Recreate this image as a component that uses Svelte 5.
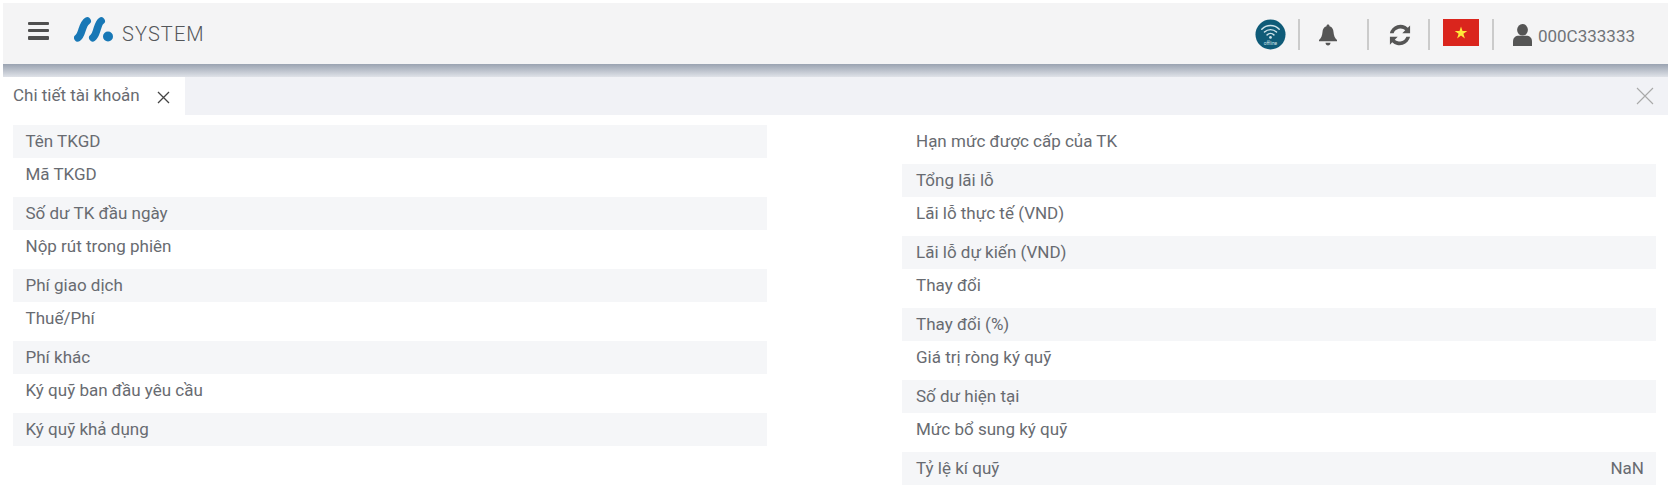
<script>
  const left = [
    ['Tên TKGD', true], ['Mã TKGD', false], ['Số dư TK đầu ngày', true], ['Nộp rút trong phiên', false],
    ['Phí giao dịch', true], ['Thuế/Phí', false], ['Phí khác', true], ['Ký quỹ ban đầu yêu cầu', false],
    ['Ký quỹ khả dụng', true]
  ];
  const right = [
    ['Hạn mức được cấp của TK', false], ['Tổng lãi lỗ', true], ['Lãi lỗ thực tế (VND)', false], ['Lãi lỗ dự kiến (VND)', true],
    ['Thay đổi', false], ['Thay đổi (%)', true], ['Giá trị ròng ký quỹ', false], ['Số dư hiện tại', true],
    ['Mức bổ sung ký quỹ', false], ['Tỷ lệ kí quỹ', true, 'NaN']
  ];
</script>

<div class="page">
  <header class="topbar">
    <button class="menu" aria-label="Menu"><span></span><span></span><span></span></button>
    <svg class="logo" viewBox="0 0 39 25" aria-hidden="true">
      <path d="M3.800 20.800C6.500 19 7.200 15.500 8.200 12.500S10.800 5.500 13.200 4" />
      <path d="M18.800 20.800C21.300 19 22 15.500 23 12.500S25 5.500 27.200 4" />
      <circle cx="34" cy="19.500" r="5" />
    </svg>
    <span class="brand">SYSTEM</span>
    <div class="tools">
      <div class="offline">
        <svg viewBox="0 0 32 32" aria-hidden="true">
          <circle cx="16" cy="16" r="15.500" fill="#0f5b78" />
          <g fill="none" stroke="#cfe3ea" stroke-width="1.500" stroke-linecap="round">
            <path d="M7 10.500a12.500 12.500 0 0 1 18 0" />
            <path d="M9.800 13.500a8.800 8.800 0 0 1 12.400 0" />
            <path d="M12.500 16.400a5 5 0 0 1 7 0" />
          </g>
          <circle cx="16" cy="19" r="1.400" fill="#cfe3ea" />
          <text x="16" y="26.500" text-anchor="middle">offline</text>
        </svg>
      </div>
      <i class="sep s1"></i>
      <svg class="bell" viewBox="0 0 20 22" aria-hidden="true">
        <path d="M10 0.500c1 0 1.500.7 1.500 1.700 2.800.8 3.800 3 4 5.800.3 3.800 1.300 6 3.500 8v1.300H1V16c2.200-2 3.200-4.200 3.500-8 .2-2.800 1.200-5 4-5.800C8.500 1.200 9 0.500 10 0.500z" />
        <path d="M7.500 18.800h5c0 1.500-1.100 2.700-2.500 2.700s-2.500-1.200-2.500-2.700z" />
      </svg>
      <i class="sep s2"></i>
      <svg class="sync" viewBox="0 0 24 24" aria-hidden="true">
        <path d="M23 1.500v8.500h-8.500l3.200-3.200A8 8 0 0 0 5 10H1A11.800 11.800 0 0 1 20.500 4z" />
        <path d="M1 22.500V14h8.500l-3.200 3.200A8 8 0 0 0 19 14h4A11.800 11.800 0 0 1 3.500 20z" />
      </svg>
      <i class="sep s3"></i>
      <svg class="flag" viewBox="0 0 36 27" aria-hidden="true">
        <rect width="36" height="27" fill="#da251d" />
        <path d="M18 7.500l1.500 4.500h4.800l-3.900 2.800 1.500 4.600-3.900-2.900-3.900 2.900 1.500-4.600-3.900-2.800h4.800z" fill="#ffe83a" />
      </svg>
      <i class="sep s4"></i>
      <svg class="user" viewBox="0 0 19 22" aria-hidden="true">
        <ellipse cx="9.500" cy="5.800" rx="5.400" ry="5.800" />
        <path d="M0 22v-4.500c0-3.800 2.500-5.800 5.800-5.800h7.400c3.300 0 5.800 2 5.800 5.800V22z" />
      </svg>
      <span class="account">000C333333</span>
    </div>
  </header>
  <div class="shade"></div>
  <nav class="tabs">
    <div class="tab">
      <span>Chi tiết tài khoản</span>
      <svg class="x" viewBox="0 0 13 13" aria-hidden="true"><path d="M1 1l11 11M12 1L1 12" /></svg>
    </div>
    <svg class="closeall" viewBox="0 0 18 18" aria-hidden="true"><path d="M1 1l16 16M17 1L1 17" /></svg>
  </nav>
  <main class="details">
    <section class="col-left">
      {#each left as [label, shaded]}
        <div class="row" class:shaded><span>{label}</span></div>
      {/each}
    </section>
    <section class="col-right">
      {#each right as [label, shaded, value]}
        <div class="row" class:shaded><span>{label}</span>{#if value}<span>{value}</span>{/if}</div>
      {/each}
    </section>
  </main>
</div>

<style>
  :global(body) {
    margin: 0;
    background: #fff;
  }
  .page {
    width: 1668px;
    height: 504px;
    overflow: hidden;
    padding: 3px 0 0 3px;
    box-sizing: border-box;
    font-family: Roboto, "Liberation Sans", sans-serif;
    color: #686b71;
  }
  .topbar {
    height: 61px;
    background: #f4f4f5;
    display: flex;
    align-items: center;
  }
  .menu {
    width: 21px;
    height: 18px;
    margin: 0 0 0 25px;
    padding: 0;
    border: 0;
    background: none;
    display: flex;
    flex-direction: column;
    justify-content: space-between;
    position: relative;
    top: -3px;
  }
  .menu span {
    display: block;
    height: 3.500px;
    background: #4f4f4f;
    border-radius: 1px;
  }
  .logo {
    width: 39px;
    height: 25px;
    margin-left: 25px;
    position: relative;
    top: -4px;
  }
  .logo path {
    fill: none;
    stroke: #1878b6;
    stroke-width: 7.500;
    stroke-linecap: round;
  }
  .logo circle {
    fill: #1878b6;
  }
  .brand {
    margin-left: 9px;
    font-size: 20px;
    font-weight: 300;
    letter-spacing: 1.100px;
    color: #54575a;
  }
  .tools {
    margin-left: auto;
    display: flex;
    align-items: center;
    padding-right: 33px;
    position: relative;
    top: 1px;
  }
  .offline,
  .offline svg {
    display: block;
    width: 31px;
    height: 31px;
  }
  .offline text {
    font-size: 5px;
    fill: #cfe3ea;
    font-family: Roboto, sans-serif;
  }
  .sep {
    width: 2px;
    height: 31px;
    background: #cbcbcb;
    display: block;
  }
  .s1 { margin-left: 12px; }
  .s2 { margin-left: 29px; }
  .s3 { margin-left: 17px; }
  .s4 { margin-left: 13px; }
  .bell {
    width: 20px;
    height: 22px;
    margin-left: 18px;
    fill: #555;
  }
  .sync {
    width: 22px;
    height: 22px;
    margin-left: 20px;
    fill: #555;
  }
  .flag {
    width: 36px;
    height: 27px;
    margin-left: 13px;
    position: relative;
    top: -2px;
  }
  .user {
    width: 19px;
    height: 22px;
    margin-left: 19px;
    fill: #555;
  }
  .account {
    font-size: 17px;
    margin-left: 6px;
    color: #707378;
    position: relative;
    top: 1px;
  }
  .shade {
    height: 13px;
    background: linear-gradient(#9aa3b1, #dfe2e8);
  }
  .tabs {
    height: 38px;
    background: #f1f2f6;
    display: flex;
    align-items: center;
    justify-content: space-between;
    padding-right: 14px;
  }
  .tab {
    width: 182px;
    height: 38px;
    background: #fff;
    display: flex;
    align-items: center;
    padding-left: 10px;
    box-sizing: border-box;
    font-size: 17px;
  }
  .tab span {
    position: relative;
    top: -1px;
  }
  .x {
    width: 13px;
    height: 13px;
    margin-left: 17px;
    position: relative;
    top: 1px;
  }
  .x path {
    stroke: #444;
    stroke-width: 1.300;
    fill: none;
  }
  .closeall {
    width: 18px;
    height: 18px;
  }
  .closeall path {
    stroke: #a9a9a9;
    stroke-width: 1.100;
    fill: none;
  }
  .details {
    display: grid;
    grid-template-columns: 754px 754px;
    column-gap: 135px;
    padding: 10px 0 0 10px;
  }
  .row {
    height: 33px;
    box-sizing: border-box;
    display: flex;
    justify-content: space-between;
    align-items: center;
    padding: 0 12px 2px 12.500px;
    font-size: 17px;
    margin-bottom: 6px;
  }
  .col-right .row {
    padding-left: 14px;
  }
  .row.shaded {
    background: #f5f6f8;
    margin-bottom: 0;
  }
</style>
